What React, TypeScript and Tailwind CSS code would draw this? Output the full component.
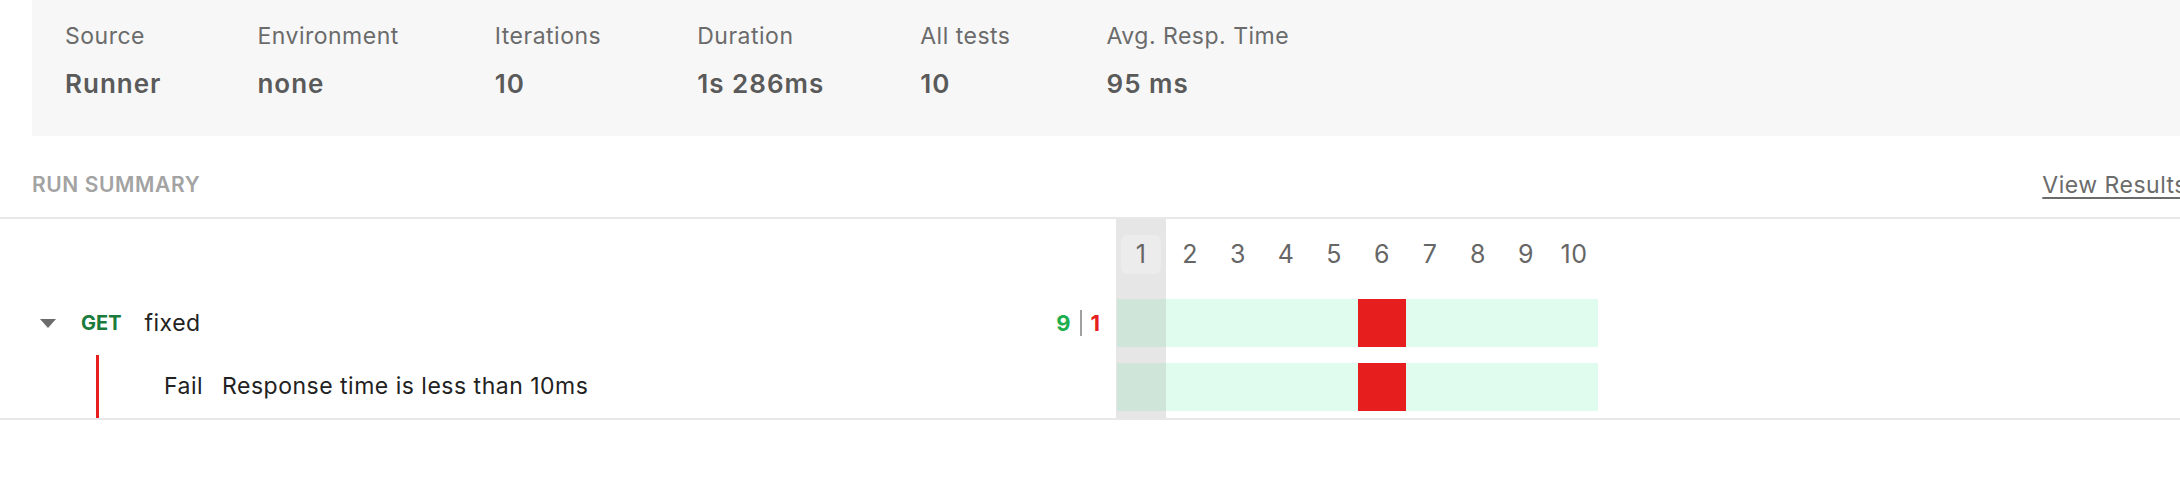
import React from "react";

const stats = [
  { label: "Source", value: "Runner" },
  { label: "Environment", value: "none" },
  { label: "Iterations", value: "10" },
  { label: "Duration", value: "1s 286ms" },
  { label: "All tests", value: "10" },
  { label: "Avg. Resp. Time", value: "95 ms" },
];

const iterations = [1, 2, 3, 4, 5, 6, 7, 8, 9, 10];
const failed = 6;

function IterationColumn({ n }: { n: number }) {
  const active = n === 1;
  const cell = n === failed ? "bg-[#e71e1e]" : active ? "bg-[#cfe5d9]" : "bg-[#e0fcee]";
  return (
    <div className={active ? "w-[50px] flex flex-col bg-[#e6e6e6] pt-4 pb-[7px]" : "w-[48px] flex flex-col pt-4 pb-[7px]"}>
      <div
        className={
          active
            ? "mx-auto w-[40px] h-[39px] rounded-md bg-[#ececec] text-center text-[25px] tracking-[0.5px] leading-[39px] text-[#666]"
            : "h-[39px] text-center text-[25px] tracking-[0.5px] leading-[39px] text-[#666]"
        }
      >
        {n}
      </div>
      <div className={active ? `mt-[25px] ml-px h-[48px] ${cell}` : `mt-[25px] h-[48px] ${cell}`} />
      <div className={active ? `mt-4 ml-px h-[48px] ${cell}` : `mt-4 h-[48px] ${cell}`} />
    </div>
  );
}

export default function App() {
  return (
    <div className="w-full h-[494px] overflow-hidden bg-white font-['Inter',sans-serif]">
      <div className="w-[2187px]">
        <div className="ml-8 h-[136px] bg-[#f7f7f7] pl-[33px] pt-[21px] flex gap-[96px]">
          {stats.map((s) => (
            <div key={s.label} className="flex flex-col">
              <div className="text-[23px] tracking-[0.5px] leading-[30px] text-[#6b6b6b] whitespace-nowrap">{s.label}</div>
              <div className="mt-[17px] text-[26px] tracking-[1px] leading-[32px] font-semibold text-[#5a5a5a] whitespace-nowrap">
                {s.value}
              </div>
            </div>
          ))}
        </div>

        <div className="h-[83px] pt-[35px] pl-8 flex justify-between border-b-2 border-[#e8e8e8]">
          <div className="text-[21px] tracking-[0.6px] leading-[28px] font-semibold text-[#a3a3a3]">RUN SUMMARY</div>
          <a className="text-[23px] tracking-[0.5px] leading-[28px] text-[#6b6b6b] underline decoration-2 underline-offset-4 whitespace-nowrap">
            View Results
          </a>
        </div>

        <div className="flex border-b-2 border-[#e8e8e8]">
          <div className="w-[1116px] flex flex-col">
            <div className="h-[80px]" />
            <div className="h-[48px] flex items-center pl-10 pr-4">
              <svg width="16" height="9" viewBox="0 0 16 9">
                <path d="M0 0 H16 L8 9 Z" fill="#6b6b6b" />
              </svg>
              <span className="ml-[25px] text-[20px] font-bold text-[#1b7b3c]">GET</span>
              <span className="ml-[23px] text-[23px] tracking-[0.5px] text-[#222]">fixed</span>
              <div className="ml-auto flex items-center gap-[9px] text-[22px] font-bold">
                <span className="text-[#1fae4e]">9</span>
                <span className="w-[2px] h-[26px] bg-[#a0a0a0]" />
                <span className="text-[#e71e1e]">1</span>
              </div>
            </div>
            <div className="mt-2 ml-[96px] h-[63px] border-l-[3px] border-[#e71e1e] pl-[65px] flex items-center text-[23px] tracking-[0.5px] text-[#222]">
              <span>Fail</span>
              <span className="ml-[19px]">Response time is less than 10ms</span>
            </div>
          </div>
          <div className="flex">
            {iterations.map((n) => (
              <IterationColumn key={n} n={n} />
            ))}
          </div>
        </div>
      </div>
    </div>
  );
}
